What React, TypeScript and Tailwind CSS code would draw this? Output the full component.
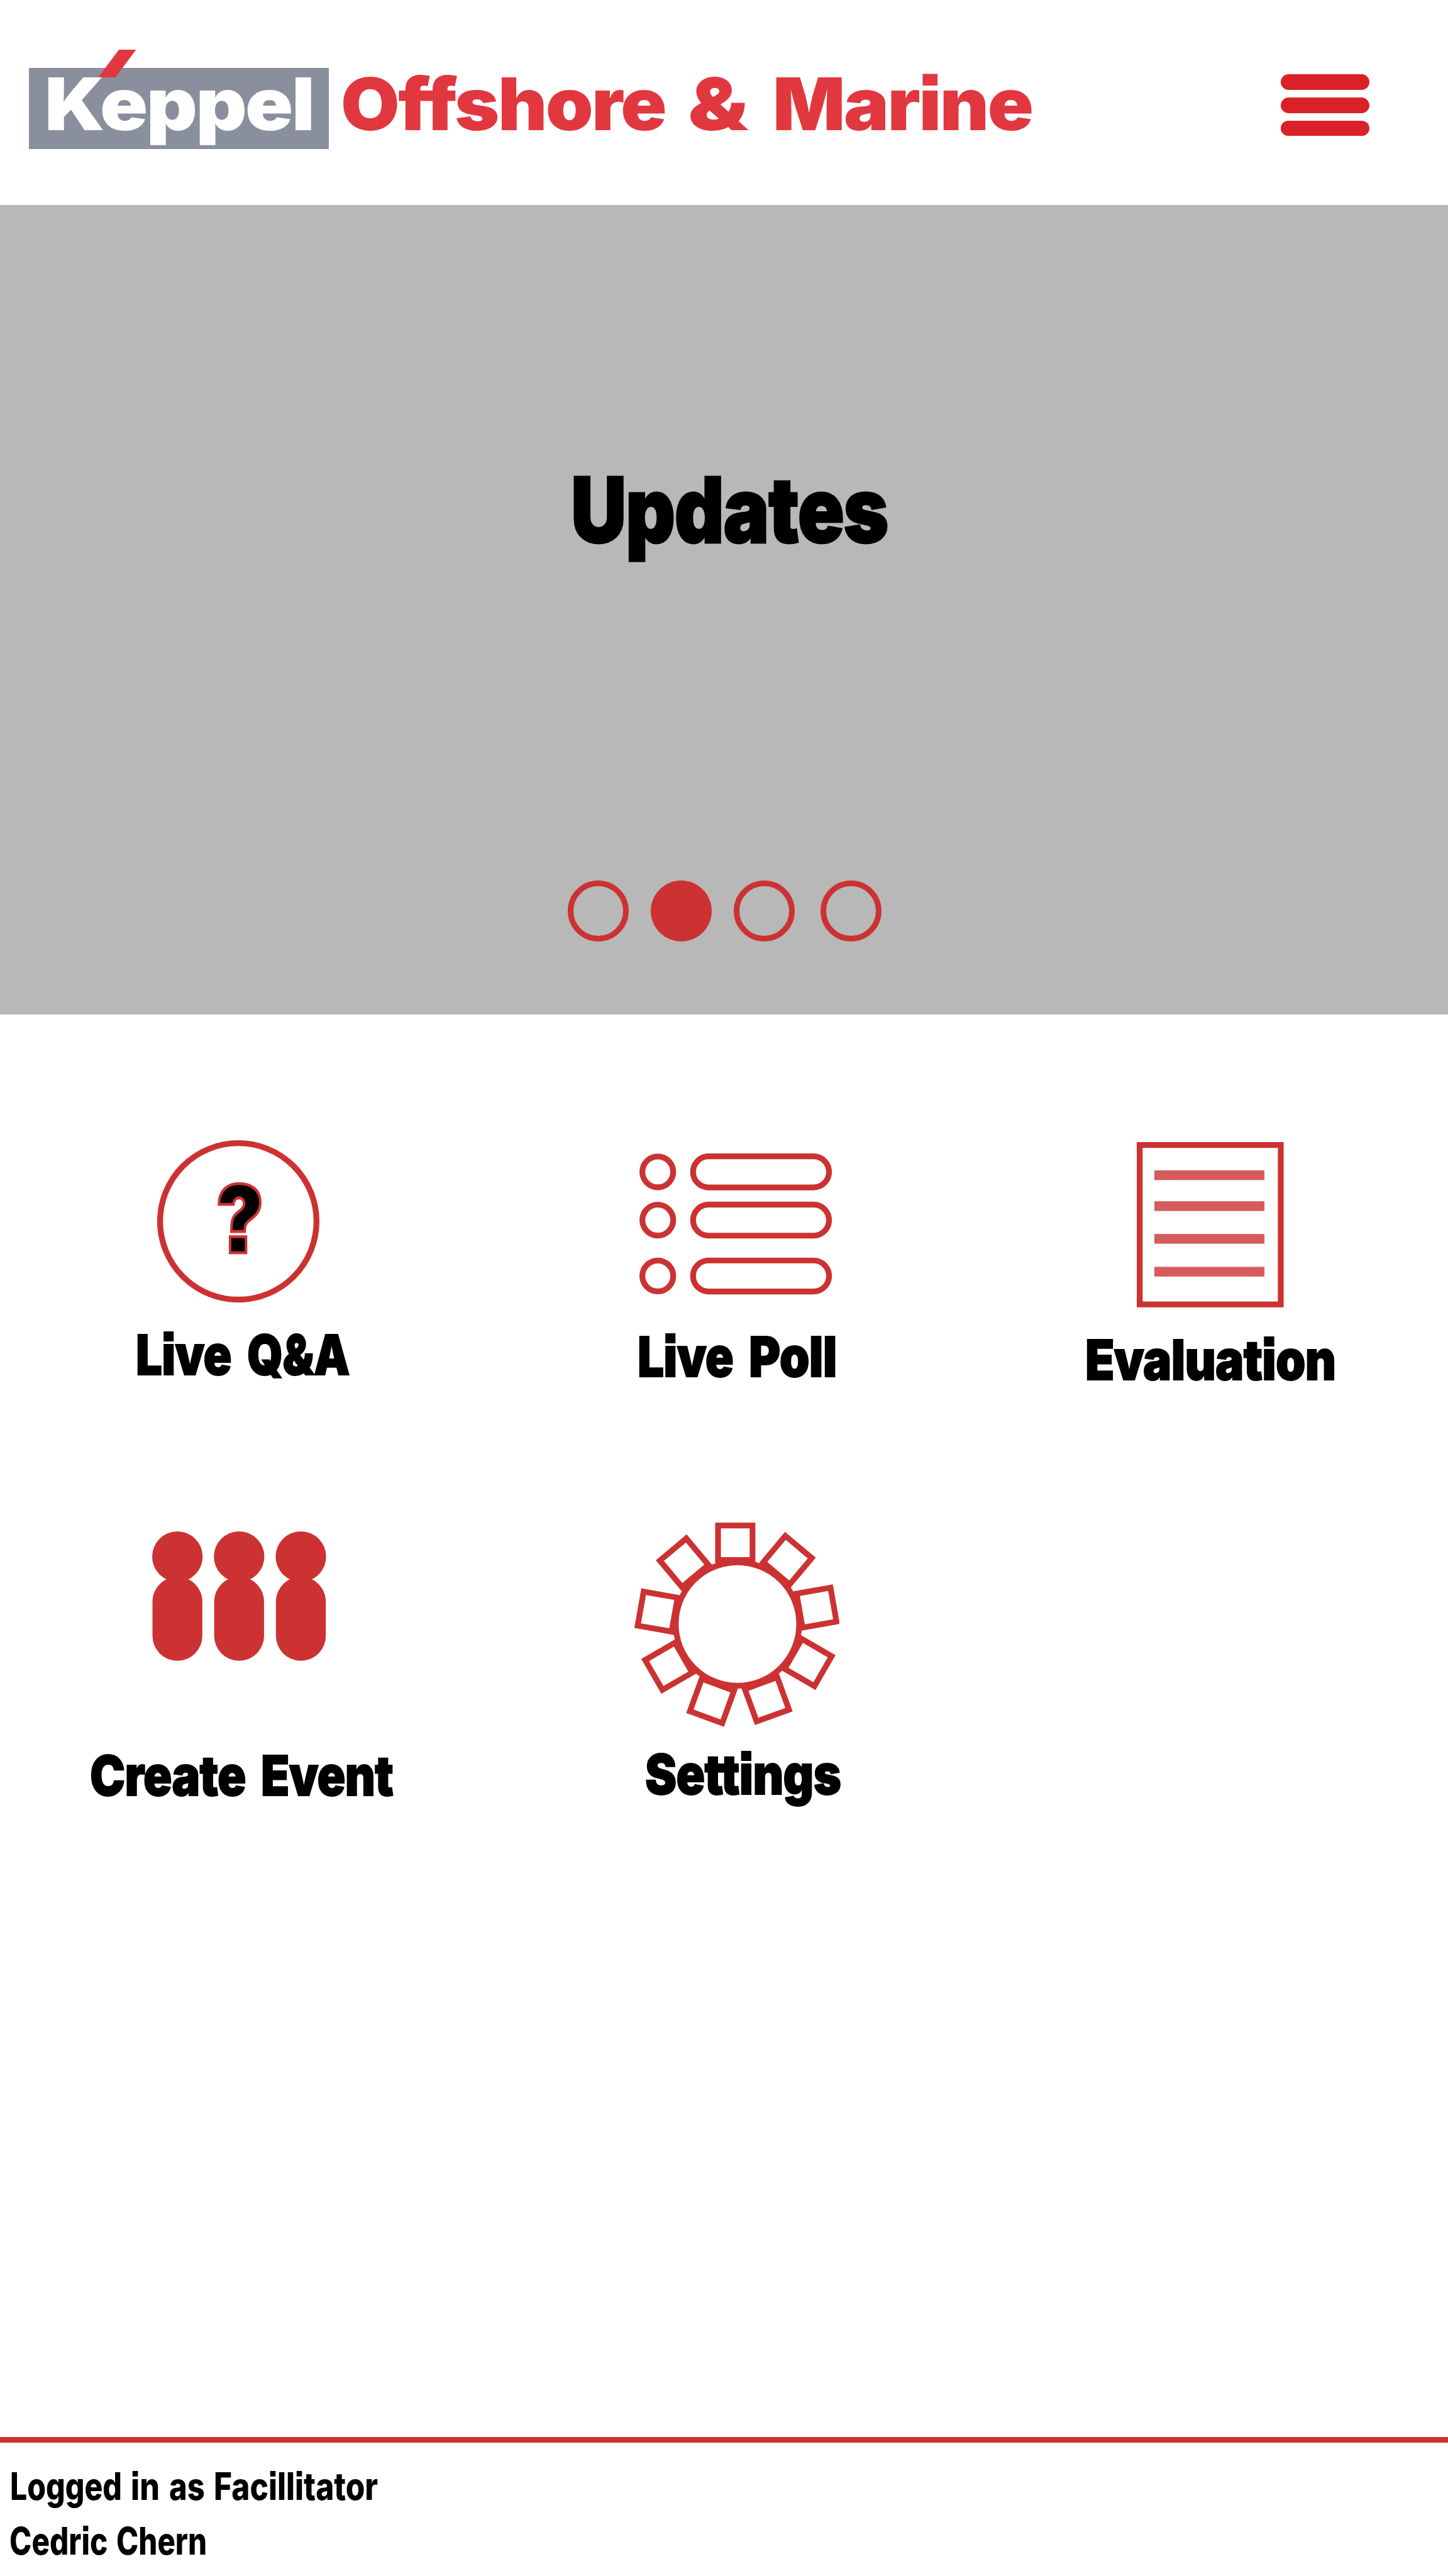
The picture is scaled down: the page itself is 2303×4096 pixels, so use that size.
function Word({ text, box, fit }: { text: string; box: string; fit: string }) {
  return (
    <span className={`block whitespace-nowrap ${box}`}>
      <span className={`block w-max origin-left ${fit}`}>{text}</span>
    </span>
  );
}

const LABEL = "flex text-[87.8px] leading-none font-black tracking-[-0.01em] [-webkit-text-stroke:0.02em_black]";
const BRAND = "text-[115.3px] leading-none font-black tracking-[-0.02em]";

// Gear teeth: centre x, centre y, rotation
const teeth = [
  [1586.2, 3329.1, 0],
  [1698.9, 3366.7, 40],
  [1761.5, 3469.1, 80],
  [1743.4, 3587.6, 30],
  [1654.5, 3667, -20],
  [1535.9, 3670.5, 20],
  [1442.5, 3595.7, -30],
  [1418.6, 3477.8, 10],
  [1475.8, 3372.3, -40],
];

function QuestionIcon() {
  return (
    <svg viewBox="339.6 2460.2 350 350.5" className="mr-[1.6px] h-[258.3px] w-[258px]">
      <circle cx="514.6" cy="2635.4" r="168.8" fill="none" stroke="#cc3232" strokeWidth="12.6" />
      <text transform="translate(466.5 2703.7) scale(0.853 1)" fontSize="202" fontWeight="900" stroke="#cc3232" strokeWidth="6.4">
        ?
      </text>
    </svg>
  );
}

function PollIcon() {
  return (
    <svg viewBox="1379.5 2489.3 415.5 304.2" className="mr-[4.6px] h-[224.2px] w-[306.2px]" fill="none" stroke="#cc3232" strokeWidth="12.5">
      {[2529.1, 2633.2, 2753.7].map((y) => (
        <g key={y}>
          <circle cx="1419.1" cy={y} r="33.3" />
          <rect x="1495.2" y={y - 33.4} width="293.5" height="66.9" rx="33.4" />
        </g>
      ))}
    </svg>
  );
}

function EvaluationIcon() {
  return (
    <svg viewBox="2453.4 2464 317.1 356.7" className="h-[262.8px] w-[233.7px]">
      <rect x="2459.7" y="2470.3" width="304.5" height="344.1" fill="none" stroke="#cc3232" strokeWidth="12.6" />
      {[2525, 2591.7, 2662.3, 2733.2].map((y) => (
        <rect key={y} x="2491.4" y={y} width="237.6" height="21" fill="#d65c5c" />
      ))}
    </svg>
  );
}

function PeopleIcon() {
  return (
    <svg viewBox="328.9 3304.2 375.5 279.3" className="ml-[1.6px] h-[205.8px] w-[276.7px]" fill="#cc3232">
      {[383.4, 516.6, 649.9].map((x) => (
        <g key={x}>
          <circle cx={x} cy="3358.7" r="54.5" />
          <rect x={x - 53.8} y="3402" width="107.6" height="181.5" rx="53.8" />
        </g>
      ))}
    </svg>
  );
}

function GearIcon() {
  return (
    <svg viewBox="1368.5 3285.6 443 440.6" className="h-[324.7px] w-[326.5px]" fill="white" stroke="#cc3232" strokeWidth="12.4">
      {teeth.map(([x, y, a]) => (
        <rect key={x} x={x - 37.2} y={y - 37.2} width="74.4" height="74.4" transform={`rotate(${a} ${x} ${y})`} />
      ))}
      <circle cx="1590.9" cy="3504.4" r="133.2" />
    </svg>
  );
}

export default function App() {
  return (
    <div className="flex h-[4096px] w-[2303px] flex-col overflow-hidden bg-white font-['Inter',sans-serif] text-black [font-feature-settings:'ss07']">
      <header className="flex h-[326px] shrink-0 items-start pl-[46.3px] pt-[107.6px]">
        <div className={`relative h-[129.7px] w-[477px] bg-[#8a8f9e] pl-[30.3px] text-white ${BRAND}`}>
          <Word text="Keppel" box="w-[418px]" fit="-ml-[6px] scale-x-[1.0907]" />
          <svg viewBox="212 107 82 60" className="absolute left-[109.9px] -top-[28.7px] h-[44.2px] w-[60.4px]">
            <polygon points="257,107 294,107 249.5,167 212,167" fill="#e1383f" />
          </svg>
        </div>
        <div className={`ml-[22.8px] flex text-[#e1383f] ${BRAND}`}>
          <Word text="Offshore" box="w-[511.2px]" fit="-ml-[3.9px] scale-x-[1.0476]" />
          <Word text="&" box="ml-[40.8px] w-[92px]" fit="-ml-[4.4px] scale-x-[1.1945]" />
          <Word text="Marine" box="ml-[44.4px] w-[406px]" fit="-ml-[5.8px] scale-x-[1.0467]" />
        </div>
        <button aria-label="Menu" className="ml-[396.4px] mt-[10.5px] flex flex-col gap-[12.3px]">
          <span className="h-[24.6px] w-[141.5px] rounded-full bg-[#da2128]" />
          <span className="h-[24.6px] w-[141.5px] rounded-full bg-[#da2128]" />
          <span className="h-[24.6px] w-[141.5px] rounded-full bg-[#da2128]" />
        </button>
      </header>

      <section className="flex h-[1287.4px] shrink-0 flex-col bg-[#b8b8b8]">
        <h1 className="ml-[912.2px] mt-[412.7px] text-[144px] leading-none font-black tracking-[-0.01em] [-webkit-text-stroke:0.02em_black]">
          <Word text="Updates" box="w-[499px]" fit="-ml-[4.6px] scale-x-[0.8493]" />
        </h1>
        <div className="ml-[903px] mt-[517.5px] flex">
          <span className="size-[96.9px] rounded-full border-[9.4px] border-[#cc3232]" />
          <span className="ml-[35.1px] size-[96.9px] rounded-full bg-[#cc3232]" />
          <span className="ml-[35.1px] size-[96.9px] rounded-full border-[9.4px] border-[#cc3232]" />
          <span className="ml-[41.3px] size-[96.9px] rounded-full border-[9.4px] border-[#cc3232]" />
        </div>
      </section>

      <main className="grid flex-1 grid-cols-[760px_824px_682px] grid-rows-[736.6px_1fr]">
        <div className="flex flex-col items-center pt-[199.7px]">
          <QuestionIcon />
          <div className={`ml-[14.2px] mt-[40px] gap-[27px] ${LABEL}`}>
            <Word text="Live" box="w-[148.5px]" fit="-ml-[2.8px] scale-x-[0.8465]" />
            <Word text="Q&A" box="w-[160.8px]" fit="-ml-[1.6px] scale-x-[0.825]" />
          </div>
        </div>
        <div className="flex flex-col items-center pt-[221.1px]">
          <PollIcon />
          <div className={`ml-[1.6px] mt-[55.6px] gap-[28.6px] ${LABEL}`}>
            <Word text="Live" box="w-[148.8px]" fit="-ml-[2.8px] scale-x-[0.8482]" />
            <Word text="Poll" box="w-[134.5px]" fit="-ml-[2.9px] scale-x-[0.8734]" />
          </div>
        </div>
        <div className="flex flex-col items-center pt-[202.5px]">
          <EvaluationIcon />
          <div className={`mt-[40px] ${LABEL}`}>
            <Word text="Evaluation" box="w-[393.2px]" fit="-ml-[2.9px] scale-x-[0.8662]" />
          </div>
        </div>
        <div className="flex flex-col items-center pt-[85.1px]">
          <PeopleIcon />
          <div className={`ml-[10px] mt-[138.7px] gap-[27.8px] ${LABEL}`}>
            <Word text="Create" box="w-[245.7px]" fit="-ml-[1.6px] scale-x-[0.8557]" />
            <Word text="Event" box="w-[207.7px]" fit="-ml-[2.8px] scale-x-[0.8449]" />
          </div>
        </div>
        <div className="flex flex-col items-center pt-[71.4px]">
          <GearIcon />
          <div className={`ml-[20.8px] mt-[31.6px] ${LABEL}`}>
            <Word text="Settings" box="w-[309.6px]" fit="-ml-[1.4px] scale-x-[0.8588]" />
          </div>
        </div>
      </main>

      <footer className="h-[221.2px] shrink-0 border-t-[9.6px] border-[#cc3232] pt-[40.6px] text-[59.8px] leading-none font-extrabold">
        <div className="ml-[18.2px] flex">
          <Word text="Logged" box="w-[172.6px]" fit="-ml-[2.7px] scale-x-[0.8044]" />
          <Word text="in" box="ml-[20.3px] w-[40.6px]" fit="-ml-[2.6px] scale-x-[0.8361]" />
          <Word text="as" box="ml-[19.1px] w-[53.7px]" fit="-ml-[1.4px] scale-x-[0.8164]" />
          <Word text="Facillitator" box="ml-[18.6px] w-[257.6px]" fit="-ml-[2.8px] scale-x-[0.8278]" />
        </div>
        <div className="ml-[17.3px] mt-[26.4px] flex gap-[17.4px]">
          <Word text="Cedric" box="w-[152.7px]" fit="-ml-[1.9px] scale-x-[0.796]" />
          <Word text="Chern" box="w-[139.6px]" fit="-ml-[1.9px] scale-x-[0.793]" />
        </div>
      </footer>
    </div>
  );
}
